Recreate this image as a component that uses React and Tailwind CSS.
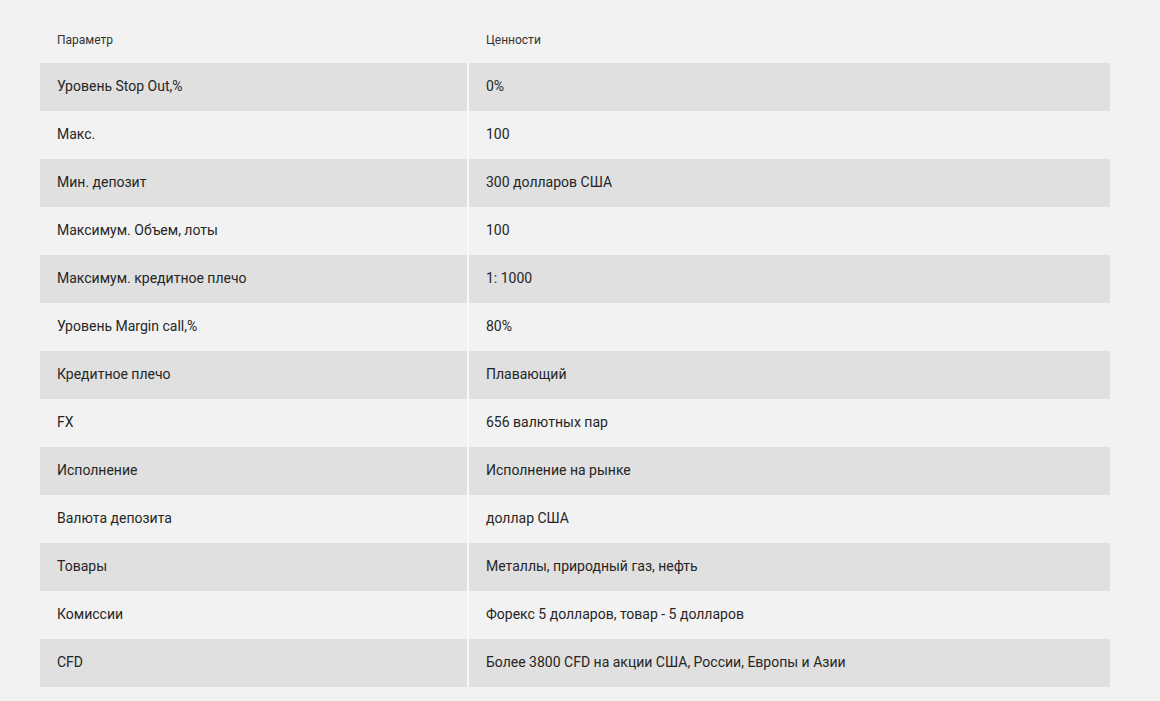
import React from 'react';

const rows = [
  ['Уровень Stop Out,%', '0%'],
  ['Макс.', '100'],
  ['Мин. депозит', '300 долларов США'],
  ['Максимум. Объем, лоты', '100'],
  ['Максимум. кредитное плечо', '1: 1000'],
  ['Уровень Margin call,%', '80%'],
  ['Кредитное плечо', 'Плавающий'],
  ['FX', '656 валютных пар'],
  ['Исполнение', 'Исполнение на рынке'],
  ['Валюта депозита', 'доллар США'],
  ['Товары', 'Металлы, природный газ, нефть'],
  ['Комиссии', 'Форекс 5 долларов, товар - 5 долларов'],
  ['CFD', 'Более 3800 CFD на акции США, России, Европы и Азии'],
];

export default function App() {
  return (
    <div className="min-h-[701px] bg-[#f2f2f2] pt-4 pl-10 font-['Roboto',sans-serif]">
      <table className="w-[1070px] border-collapse text-left">
        <thead>
          <tr className="h-[47px] text-xs text-[#333]">
            <th className="w-[428px] pl-[17px] font-normal border-r-2 border-transparent">Параметр</th>
            <th className="pl-[17px] font-normal">Ценности</th>
          </tr>
        </thead>
        <tbody>
          {rows.map(([k, v], i) => (
            <tr key={i} className={`h-12 text-sm text-[#262626] ${i % 2 === 0 ? 'bg-[#e0e0e0]' : 'bg-transparent'}`}>
              <td className="w-[428px] pl-[17px] pb-[2px] border-r-2 border-[#f8f8f8]">{k}</td>
              <td className="pl-[17px] pb-[2px]">{v}</td>
            </tr>
          ))}
        </tbody>
      </table>
    </div>
  );
}
